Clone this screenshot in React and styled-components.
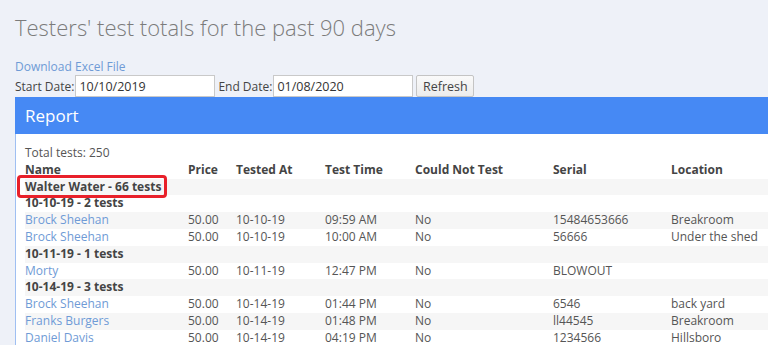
import React from "react";
import styled, { createGlobalStyle } from "styled-components";

const Global = createGlobalStyle`
  html, body { margin: 0; padding: 0; background: #eef1f8; overflow: hidden; }
  body { font-family: "Open Sans", "Liberation Sans", sans-serif; color: #555; }
`;

const Page = styled.div`
  padding: 10px 0 0 15px;
  width: 900px;
`;

const Title = styled.h1`
  margin: 0;
  font-weight: 300;
  font-size: 22px;
  line-height: 34px;
  color: #7b7b7b;
`;

const DownloadLink = styled.a`
  display: block;
  margin-top: 15px;
  font-size: 12px;
  line-height: 16px;
  color: #6f9bd6;
  text-decoration: none;
`;

const Filters = styled.div`
  display: flex;
  align-items: center;
  height: 22px;
  font-size: 12px;
  color: #444;
`;

const Label = styled.label``;

const DateInput = styled.input`
  box-sizing: border-box;
  width: 140px;
  height: 22px;
  margin: 0 3px 0 1px;
  padding: 0 3px;
  border: 1px solid #c9c9c9;
  background: #fff;
  font-family: "Open Sans", "Liberation Sans", sans-serif;
  font-size: 12.5px;
  color: #333;
  outline: none;
`;

const Button = styled.button`
  box-sizing: border-box;
  width: 58px;
  height: 22px;
  border: 1px solid #c4c4c4;
  border-radius: 2px;
  background: linear-gradient(#fafafa, #ececec);
  font-family: "Open Sans", "Liberation Sans", sans-serif;
  font-size: 12.5px;
  color: #444;
  padding: 0;
`;

const Panel = styled.section`
  width: 820px;
  background: #fff;
  border-left: 1px solid #9fbff2;
`;

const PanelHeader = styled.div`
  height: 37px;
  background: #4689f4;
  display: flex;
  align-items: center;
  padding-left: 10px;
  margin-left: -1px;
  color: #fff;
  font-size: 17px;
  font-weight: 400;
`;

const PanelBody = styled.div`
  padding: 11px 0 0 9px;
  font-size: 12px;
  line-height: 16.8px;
`;

const Total = styled.div`
  color: #555;
`;

const Table = styled.table`
  border-collapse: collapse;
  width: 800px;
  table-layout: fixed;
  td, th { padding: 0; height: 16.8px; text-align: left; white-space: nowrap; }
  th { font-weight: 700; color: #444; }
  tbody tr:nth-child(odd) { background: #f6f6f6; }
`;

const GroupCell = styled.td`
  font-weight: 700;
  color: #444;
`;

const Highlight = styled.span`
  position: relative;
  &::after {
    content: "";
    position: absolute;
    left: -8px;
    right: -6px;
    top: -3px;
    bottom: -3px;
    border: 3px solid #e8202a;
    border-radius: 4px;
  }
`;

const Link = styled.a`
  color: #6f9bd6;
  text-decoration: none;
`;

const cols = [163, 48, 89, 90, 138, 118, 154];
const heads = ["Name", "Price", "Tested At", "Test Time", "Could Not Test", "Serial", "Location"];

const rows = [
  { g: "Walter Water - 66 tests", tester: true },
  { g: "10-10-19 - 2 tests" },
  { r: ["Brock Sheehan", "50.00", "10-10-19", "09:59 AM", "No", "15484653666", "Breakroom"] },
  { r: ["Brock Sheehan", "50.00", "10-10-19", "10:00 AM", "No", "56666", "Under the shed"] },
  { g: "10-11-19 - 1 tests" },
  { r: ["Morty", "50.00", "10-11-19", "12:47 PM", "No", "BLOWOUT", ""] },
  { g: "10-14-19 - 3 tests" },
  { r: ["Brock Sheehan", "50.00", "10-14-19", "01:44 PM", "No", "6546", "back yard"] },
  { r: ["Franks Burgers", "50.00", "10-14-19", "01:48 PM", "No", "ll44545", "Breakroom"] },
  { r: ["Daniel Davis", "50.00", "10-14-19", "04:19 PM", "No", "1234566", "Hillsboro"] },
];

export default function App() {
  return (
    <>
      <Global />
      <Page>
        <Title>Testers' test totals for the past 90 days</Title>
        <DownloadLink href="#">Download Excel File</DownloadLink>
        <Filters>
          <Label>Start Date:</Label>
          <DateInput defaultValue="10/10/2019" />
          <Label>End Date:</Label>
          <DateInput defaultValue="01/08/2020" />
          <Button>Refresh</Button>
        </Filters>
        <Panel>
          <PanelHeader>Report</PanelHeader>
          <PanelBody>
            <Total>Total tests: 250</Total>
            <Table>
              <colgroup>
                {cols.map((w, i) => (
                  <col key={i} style={{ width: w }} />
                ))}
              </colgroup>
              <thead>
                <tr>
                  {heads.map((h) => (
                    <th key={h}>{h}</th>
                  ))}
                </tr>
              </thead>
              <tbody>
                {rows.map((row, i) =>
                  row.g ? (
                    <tr key={i}>
                      <GroupCell colSpan={7}>
                        {row.tester ? <Highlight>{row.g}</Highlight> : row.g}
                      </GroupCell>
                    </tr>
                  ) : (
                    <tr key={i}>
                      {row.r.map((c, j) => (
                        <td key={j}>{j === 0 ? <Link href="#">{c}</Link> : c}</td>
                      ))}
                    </tr>
                  )
                )}
              </tbody>
            </Table>
          </PanelBody>
        </Panel>
      </Page>
    </>
  );
}
